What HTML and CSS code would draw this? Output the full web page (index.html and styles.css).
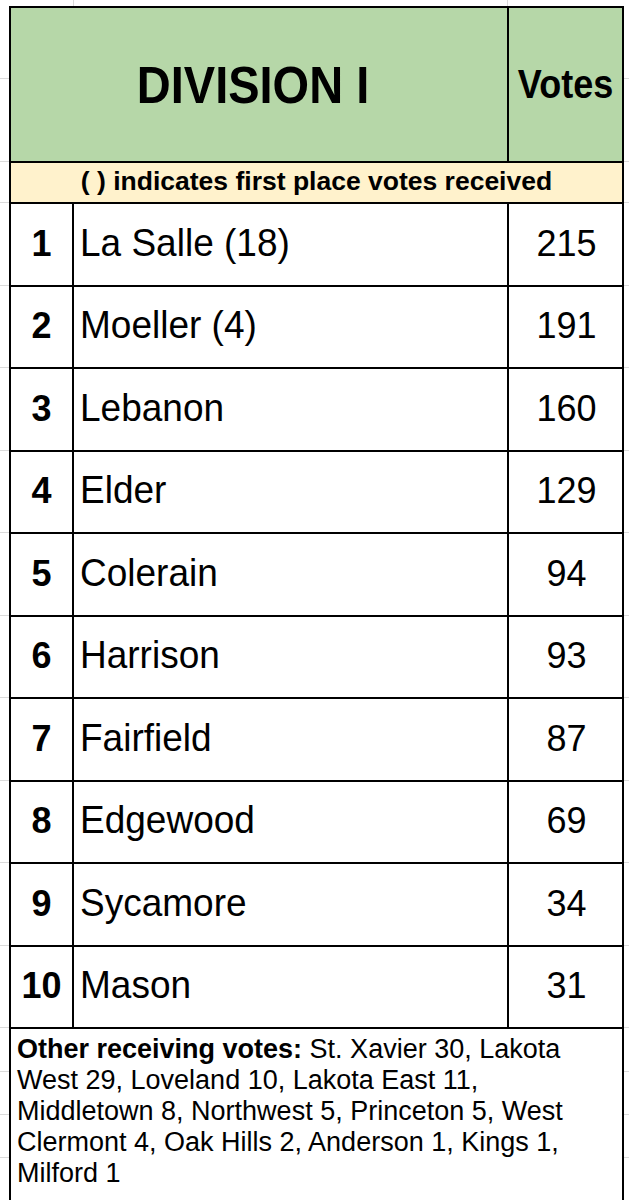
FILE: index.html
```html
<!DOCTYPE html>
<html>
<head>
<meta charset="utf-8">
<link rel="stylesheet" href="styles.css">
</head>
<body>
<div class="table">
  <div class="head">
    <div class="title"><span class="tall">DIVISION I</span></div>
    <div class="votes-head"><span class="tall">Votes</span></div>
  </div>
  <div class="note">( ) indicates first place votes received</div>
  <div class="row"><div class="rank"><span class="t">1</span></div><div class="name"><span class="t">La Salle (18)</span></div><div class="pts"><span class="t">215</span></div></div>
  <div class="row"><div class="rank"><span class="t">2</span></div><div class="name"><span class="t">Moeller (4)</span></div><div class="pts"><span class="t">191</span></div></div>
  <div class="row"><div class="rank"><span class="t">3</span></div><div class="name"><span class="t">Lebanon</span></div><div class="pts"><span class="t">160</span></div></div>
  <div class="row"><div class="rank"><span class="t">4</span></div><div class="name"><span class="t">Elder</span></div><div class="pts"><span class="t">129</span></div></div>
  <div class="row"><div class="rank"><span class="t">5</span></div><div class="name"><span class="t">Colerain</span></div><div class="pts"><span class="t">94</span></div></div>
  <div class="row"><div class="rank"><span class="t">6</span></div><div class="name"><span class="t">Harrison</span></div><div class="pts"><span class="t">93</span></div></div>
  <div class="row"><div class="rank"><span class="t">7</span></div><div class="name"><span class="t">Fairfield</span></div><div class="pts"><span class="t">87</span></div></div>
  <div class="row"><div class="rank"><span class="t">8</span></div><div class="name"><span class="t">Edgewood</span></div><div class="pts"><span class="t">69</span></div></div>
  <div class="row"><div class="rank"><span class="t">9</span></div><div class="name"><span class="t">Sycamore</span></div><div class="pts"><span class="t">34</span></div></div>
  <div class="row"><div class="rank"><span class="t">10</span></div><div class="name"><span class="t">Mason</span></div><div class="pts"><span class="t">31</span></div></div>
  <div class="footer"><b>Other receiving votes:</b> St. Xavier 30, Lakota West 29, Loveland 10, Lakota East 11, Middletown 8, Northwest 5, Princeton 5, West Clermont 4, Oak Hills 2, Anderson 1, Kings 1, Milford 1</div>
</div>
</body>
</html>
```
FILE: styles.css
```css
* { box-sizing: border-box; }
html, body { margin: 0; padding: 0; }
body {
  width: 629px;
  height: 1200px;
  overflow: hidden;
  font-family: "Liberation Sans", Arial, sans-serif;
  color: #000;
  background-color: #fff;
  background-repeat: no-repeat;
  background-image:
    linear-gradient(#dadada, #dadada),
    linear-gradient(#dadada, #dadada),
    linear-gradient(#dadada, #dadada),
    linear-gradient(#dadada, #dadada),
    linear-gradient(#dadada, #dadada),
    linear-gradient(#dadada, #dadada),
    linear-gradient(#dadada, #dadada),
    linear-gradient(#dadada, #dadada),
    linear-gradient(#dadada, #dadada),
    linear-gradient(#dadada, #dadada),
    linear-gradient(#dadada, #dadada),
    linear-gradient(#dadada, #dadada),
    linear-gradient(#dadada, #dadada),
    linear-gradient(#dadada, #dadada),
    linear-gradient(#dadada, #dadada),
    linear-gradient(#dadada, #dadada),
    linear-gradient(#dadada, #dadada),
    linear-gradient(#dadada, #dadada);
  background-size:
    100% 1px, 100% 1px, 100% 1px, 100% 1px, 100% 1px, 100% 1px,
    100% 1px, 100% 1px, 100% 1px, 100% 1px, 100% 1px, 100% 1px,
    100% 1px, 100% 1px, 100% 1px, 100% 1px,
    1px 100%, 1px 100%;
  background-position:
    0 78px, 0 161px, 0 202px, 0 285px, 0 367px, 0 450px,
    0 532px, 0 615px, 0 697px, 0 780px, 0 862px, 0 945px,
    0 1027px, 0 1071px, 0 1114px, 0 1157px,
    73px 0, 507px 0;
}

.table {
  margin: 6px 0 0 9px;
  width: 615px;
  border: 2px solid #000;
  border-bottom: none;
  background: #fff;
}

.tall {
  display: inline-block;
  transform: scaleY(1.12);
}
.t {
  display: inline-block;
  transform: scaleY(1.05);
}

.head {
  display: grid;
  grid-template-columns: 498px 1fr;
  height: 155px;
  background: #b6d7a8;
  border-bottom: 2px solid #000;
}
.title {
  display: flex;
  align-items: center;
  justify-content: center;
  padding-right: 12px;
  font-weight: bold;
  font-size: 47px;
  border-right: 2px solid #000;
}
.votes-head {
  display: flex;
  align-items: center;
  justify-content: center;
  font-weight: bold;
  font-size: 36px;
}

.note {
  height: 41px;
  background: #fff2cc;
  border-bottom: 2px solid #000;
  display: flex;
  align-items: center;
  justify-content: center;
  font-weight: bold;
  font-size: 26.5px;
  padding-bottom: 2px;
}

.row {
  display: grid;
  grid-template-columns: 63px 435px 1fr;
  height: 82.5px;
  border-bottom: 2px solid #000;
  background: #fff;
}
.rank, .name, .pts {
  display: flex;
  align-items: center;
  padding-bottom: 3px;
}
.rank {
  justify-content: center;
  font-weight: bold;
  font-size: 36px;
  border-right: 2px solid #000;
}
.name {
  padding-left: 6px;
  font-size: 37px;
  border-right: 2px solid #000;
}
.pts {
  justify-content: center;
  font-size: 36px;
  padding-left: 2px;
}

.footer {
  height: 200px;
  padding: 5px 40px 0 6px;
  font-size: 27px;
  line-height: 31px;
  background: #fff;
}
.footer b { font-weight: bold; }
```
